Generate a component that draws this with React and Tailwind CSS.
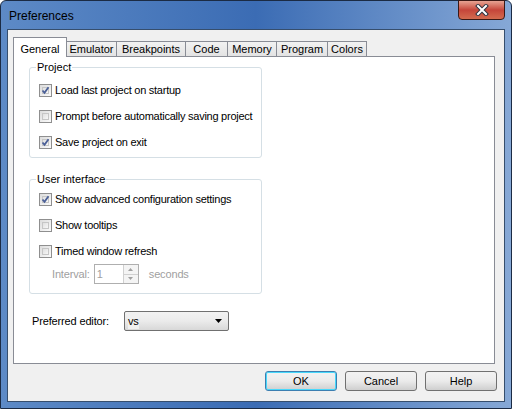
import { useState } from "react";

const font = { fontFamily: '"Liberation Sans", Arial, sans-serif' };

function Check({ checked, label, disabled }) {
  return (
    <label className="flex items-center h-[13px] gap-[3px] text-[11px] text-black whitespace-nowrap tracking-[-0.25px]">
      <span className="w-[13px] h-[13px] shrink-0 border border-[#8f8f8f] bg-gradient-to-br from-[#dcdcdc] to-[#fbfbfb] p-[2px] flex">
        <span className="flex-1 border border-[#c6c6c6] bg-gradient-to-br from-[#e0e0e0] to-[#f6f6f6] flex items-center justify-center">
          {checked && (
            <svg width="9" height="9" viewBox="0 0 9 9" className="-m-[2px]">
              <path d="M1.5 4.5 L3.5 6.8 L7.5 1.2" stroke="#4a5f97" strokeWidth="1.8" fill="none" />
            </svg>
          )}
        </span>
      </span>
      <span className={disabled ? "text-[#a0a0a0]" : ""}>{label}</span>
    </label>
  );
}

function Group({ title, children, className }) {
  return (
    <fieldset className={"min-w-0 border border-[#d5dfe5] rounded-[3px] pl-[9px] pr-[8px] " + className}>
      <legend className="px-[1px] ml-[-3px] text-[11px] leading-[13px] text-black">{title}</legend>
      {children}
    </fieldset>
  );
}

function Btn({ children, focused }) {
  return (
    <button
      className={
        "w-[72px] h-[20px] rounded-[3px] border text-[11px] text-black bg-gradient-to-b from-[#f2f2f2] via-[#ebebeb] to-[#cfcfcf] " +
        (focused ? "border-[#3c7fb1] shadow-[inset_0_0_0_1px_#48d8fb]" : "border-[#707070]")
      }
    >
      {children}
    </button>
  );
}

const tabs = ["General", "Emulator", "Breakpoints", "Code", "Memory", "Program", "Colors"];
const tabW = [54, 51, 70, 43, 50, 52, 40];

export default function App() {
  const [tab, setTab] = useState(0);
  return (
    <div style={font} className="w-[512px] h-[409px] bg-white">
      <div className="w-full h-full rounded-t-[6px] border border-[#1b2b44] bg-gradient-to-r from-[#5d8ac6] via-[#3b6cb4] to-[#86a8d6] flex flex-col">
        <div className="h-[28px] flex items-start justify-between pl-[8px] pr-[6px]">
          <span className="mt-[6px] text-[12px] text-black">Preferences</span>
          <div className="w-[47px] h-[20px] -mt-[1px] rounded-b-[4px] border border-[#3a1915] bg-gradient-to-b from-[#e6a393] via-[#c5453a] to-[#d36b4f] flex items-center justify-center">
            <svg width="14" height="12" viewBox="0 0 14 12">
              <path d="M3 2 L11 10 M11 2 L3 10" stroke="#2e3440" strokeWidth="4" strokeLinecap="square" />
              <path d="M3 2 L11 10 M11 2 L3 10" stroke="#fff" strokeWidth="2" strokeLinecap="square" />
            </svg>
          </div>
        </div>
        <div className="mx-[6px] mb-[6px] flex-1 border border-[#364e6d] bg-[#f0f0f0] flex flex-col px-[5px] pt-[6px]">
          <div className="flex items-end h-[20px] relative z-10">
            {tabs.map((t, i) =>
              i === tab ? (
                <div
                  key={t}
                  onClick={() => setTab(i)}
                  style={{ width: tabW[i] }}
                  className="h-[20px] -mb-[1px] border border-b-0 border-[#898c95] bg-white text-[11px] whitespace-nowrap flex items-start justify-center pt-[3px] mr-[-1px]"
                >
                  {t}
                </div>
              ) : (
                <div
                  key={t}
                  onClick={() => setTab(i)}
                  style={{ width: tabW[i] }}
                  className="h-[16px] -mb-[1px] border border-[#898c95] bg-gradient-to-b from-[#f2f2f2] to-[#e3e3e3] text-[11px] whitespace-nowrap flex items-center justify-center mr-[-1px]"
                >
                  {t}
                </div>
              )
            )}
          </div>
          <div className="w-[482px] h-[308px] border border-[#898c95] bg-white flex flex-col pl-[15px] pt-[4px]">
            <Group title="Project" className="w-[233px] h-[97px] flex flex-col gap-[13px] pt-[10px]">
              <Check checked label="Load last project on startup" />
              <Check label="Prompt before automatically saving project" />
              <Check checked label="Save project on exit" />
            </Group>
            <Group title="User interface" className="w-[233px] h-[121px] mt-[15px] flex flex-col gap-[13px] pt-[7px]">
              <Check checked label="Show advanced configuration settings" />
              <Check label="Show tooltips" />
              <Check label="Timed window refresh" />
              <div className="flex items-center text-[11px] text-[#a0a0a0] -mt-[7px] pl-[13px] tracking-[-0.15px]">
                <span>Interval:</span>
                <div className="ml-[4px] w-[45px] h-[20px] border border-[#afafaf] flex items-center">
                  <span className="flex-1 pl-[2px] text-[#a0a0a0]">1</span>
                  <div className="w-[15px] h-[18px] flex flex-col border-l border-[#d0d0d0]">
                    <div className="flex-1 border-b border-[#d0d0d0] bg-[#f4f4f4] flex items-center justify-center">
                      <svg width="5" height="3" viewBox="0 0 5 3"><path d="M0 3 L2.5 0 L5 3Z" fill="#a0a0a0" /></svg>
                    </div>
                    <div className="flex-1 bg-[#f4f4f4] flex items-center justify-center">
                      <svg width="5" height="3" viewBox="0 0 5 3"><path d="M0 0 L2.5 3 L5 0Z" fill="#a0a0a0" /></svg>
                    </div>
                  </div>
                </div>
                <span className="ml-[10px]">seconds</span>
              </div>
            </Group>
            <div className="flex items-center mt-[17px] pl-[3px] text-[11px] tracking-[-0.15px]">
              <span className="w-[92px]">Preferred editor:</span>
              <div className="w-[105px] h-[20px] rounded-[2px] border border-[#707070] bg-gradient-to-b from-[#f2f2f2] via-[#ebebeb] to-[#d8d8d8] flex items-center pl-[3px] pr-[6px] justify-between">
                <span className="bg-[#f0f0f0]">vs</span>
                <svg width="7" height="4" viewBox="0 0 7 4"><path d="M0 0 L7 0 L3.5 4Z" fill="#000" /></svg>
              </div>
            </div>
          </div>
          <div className="flex justify-end gap-[8px] mt-[7px] pr-[2px]">
            <Btn focused>OK</Btn>
            <Btn>Cancel</Btn>
            <Btn>Help</Btn>
          </div>
        </div>
      </div>
    </div>
  );
}
